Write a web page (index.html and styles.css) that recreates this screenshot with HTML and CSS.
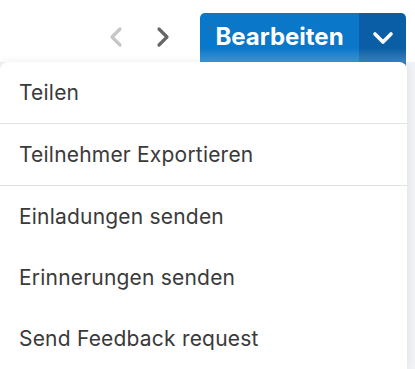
FILE: index.html
```html
<!DOCTYPE html>
<html lang="de">
<head>
  <meta charset="UTF-8" />
  <meta name="viewport" content="width=device-width, initial-scale=1.0"/>
  <title>Bearbeiten Menü</title>
  <link rel="stylesheet" href="styles.css">
</head>
<body>

<div class="toolbar">
  <!-- Pager -->
  <span class="pager prev">
    <svg width="18" height="22" viewBox="0 0 18 22"><path d="M13 3 L5 11 L13 19" fill="none" stroke="currentColor" stroke-width="3.2" stroke-linecap="round" stroke-linejoin="round"/></svg>
  </span>
  <span class="pager next">
    <svg width="18" height="22" viewBox="0 0 18 22"><path d="M5 3 L13 11 L5 19" fill="none" stroke="currentColor" stroke-width="3.2" stroke-linecap="round" stroke-linejoin="round"/></svg>
  </span>

  <!-- Split button -->
  <div class="split-btn">
    <button class="main-btn">Bearbeiten</button>
    <button class="caret-btn">
      <svg width="22" height="14" viewBox="0 0 22 14"><path d="M3 3 L11 11 L19 3" fill="none" stroke="white" stroke-width="3.6" stroke-linecap="round" stroke-linejoin="round"/></svg>
    </button>
  </div>
</div>

<div class="menu">
  <div class="item">Teilen</div>
  <div class="item sep">Teilnehmer Exportieren</div>
  <div class="item sep">Einladungen senden</div>
  <div class="item">Erinnerungen senden</div>
  <div class="item">Send Feedback request</div>
</div>

</body>
</html>
```

FILE: styles.css
```css
body {
  margin: 0;
  background: #f1f2f5;
  font-family: Inter, "Noto Sans", sans-serif;
  overflow: hidden;
}

.toolbar {
  background: white;
  height: 62px;
  display: flex;
  justify-content: flex-end;
  align-items: flex-start;
  padding-right: 9px;
}

.pager {
  display: flex;
  align-items: center;
  height: 48px;
  margin-top: 13px;
}

.prev {
  color: #c6c6c6;
  margin-right: 29px;
}

.next {
  color: #666;
  margin-right: 28px;
}

.split-btn {
  display: flex;
  margin-top: 13px;
  height: 56px;
  border-radius: 5px;
  overflow: hidden;
}

.split-btn button {
  border: none;
  color: white;
  font-family: Inter, "Noto Sans", sans-serif;
  padding: 0;
  display: flex;
  align-items: flex-start;
  justify-content: center;
}

.main-btn {
  width: 159px;
  font-size: 24px;
  font-weight: 700;
  padding-top: 9px !important;
  background: linear-gradient(to bottom, #0a77c8 0px, #0a77c8 35px, #3b93d6 48px);
}

.caret-btn {
  width: 47px;
  padding-top: 18px !important;
  background: linear-gradient(to bottom, #0a5ea5 0px, #0a5ea5 35px, #3a7fbc 48px);
}

.menu {
  position: relative;
  width: 407px;
  height: calc(100vh - 62px);
  background: white;
  border-radius: 8px 8px 0 0;
  box-shadow: 0 0 8px rgba(0, 0, 0, 0.08);
}

.item {
  height: 61px;
  line-height: 61px;
  padding-left: 19px;
  font-size: 21px;
  font-weight: 400;
  letter-spacing: 0.2px;
  color: #3a3a3a;
}

.item.sep {
  border-top: 1px solid #e3e3e3;
}
```
